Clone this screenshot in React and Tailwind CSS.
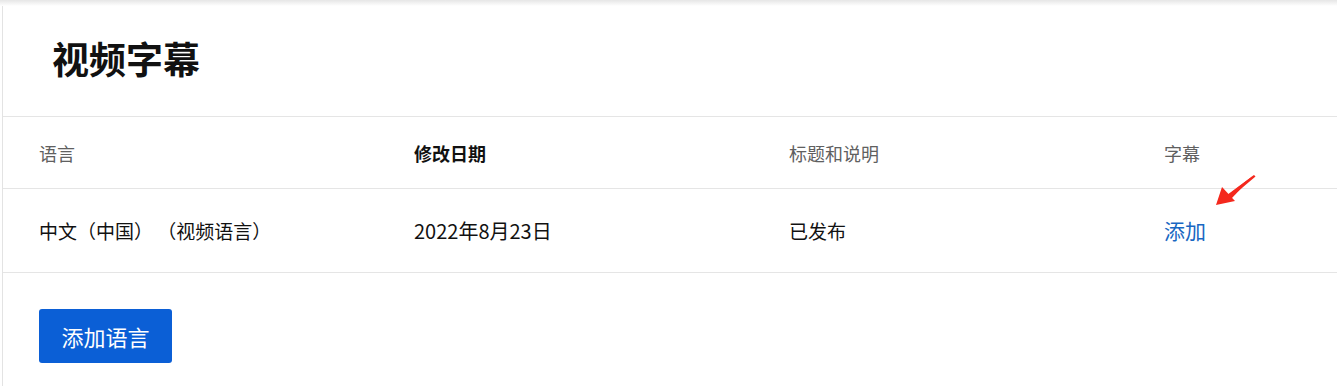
export default function App() {
  const cols = ['w-[375px]', 'w-[375px]', 'w-[375px]', 'flex-1'];
  return (
    <div
      className="relative h-[386px] w-[1337px] overflow-hidden bg-white pl-[2px]"
      style={{ fontFamily: '"Noto Sans CJK SC", "Noto Sans", sans-serif' }}
    >
      {/* top shadow */}
      <div className="absolute left-0 right-0 top-0 h-[6px] bg-gradient-to-b from-[#e6e6e6] to-white" />
      <div className="h-full border-l border-[#e3e3e3]">
        <div className="flex h-[116px] items-center pl-[49px]">
          <h1 className="text-[37px] font-bold leading-none text-[#111]">视频字幕</h1>
        </div>
        <div className="flex h-[72px] items-center border-t border-[#e5e5e5] pl-[36px] text-[18px] leading-none">
          <div className={`${cols[0]} text-[#606060]`}>语言</div>
          <div className={`${cols[1]} font-bold text-[#111]`}>修改日期</div>
          <div className={`${cols[2]} text-[#606060]`}>标题和说明</div>
          <div className={`${cols[3]} text-[#606060]`}>字幕</div>
        </div>
        <div className="flex h-[85px] items-center border-y border-[#e5e5e5] pl-[36px] text-[19px] leading-none text-[#111]">
          <div className={`${cols[0]} whitespace-pre`}>中文（中国） （视频语言）</div>
          <div className={`${cols[1]} text-[20px]`}>2022年8月23日</div>
          <div className={cols[2]}>已发布</div>
          <div className={`${cols[3]} relative`}>
            <span className="text-[21px] text-[#1967c2]">添加</span>
            <svg className="absolute left-[50px] top-[-46px]" width="44" height="36" viewBox="0 0 44 36">
              <path d="M40 1 L14 21 L17 25 Z" fill="#f4281d" />
              <path d="M2 31 L8 13 L21 27 Z" fill="#f4281d" />
              <path d="M40 1 L41.5 2.5 L16 24 L13 21 Z" fill="#f4281d" />
            </svg>
          </div>
        </div>
        <div className="pl-[36px] pt-[36px]">
          <button className="h-[54px] w-[133px] rounded-[3px] bg-[#0b5fd6] text-[22px] leading-none text-white">
            添加语言
          </button>
        </div>
      </div>
    </div>
  );
}
